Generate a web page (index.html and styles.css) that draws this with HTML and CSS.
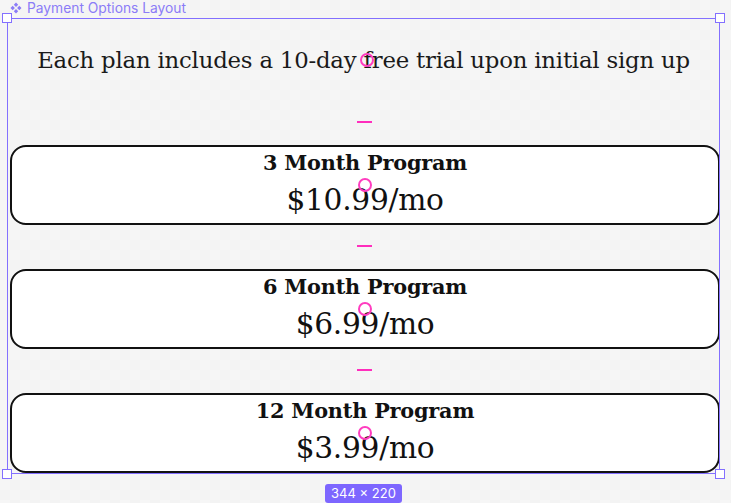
FILE: index.html
```html
<!DOCTYPE html>
<html>
<head>
<meta charset="utf-8">
<link rel="stylesheet" href="styles.css">
</head>
<body>
<div class="canvas">
  <div class="layer-label">
    <svg class="comp-icon" width="12" height="12" viewBox="0 0 12 12"><path d="M6 0.5 L8.2 2.7 L6 4.9 L3.8 2.7 Z M6 7.1 L8.2 9.3 L6 11.5 L3.8 9.3 Z M0.5 6 L2.7 3.8 L4.9 6 L2.7 8.2 Z M7.1 6 L9.3 3.8 L11.5 6 L9.3 8.2 Z" fill="#8b7cf7"/></svg>
    <span>Payment Options Layout</span>
  </div>
  <div class="frame">
    <p class="intro">Each plan includes a 10-day free trial upon initial sign up</p>
    <div class="plans">
      <div class="plan">
        <div class="plan-title">3 Month Program</div>
        <div class="plan-price">$10.99/mo</div>
      </div>
      <div class="plan">
        <div class="plan-title">6 Month Program</div>
        <div class="plan-price">$6.99/mo</div>
      </div>
      <div class="plan">
        <div class="plan-title">12 Month Program</div>
        <div class="plan-price">$3.99/mo</div>
      </div>
    </div>
    <span class="gap-mark m1"></span>
    <span class="gap-mark m2"></span>
    <span class="gap-mark m3"></span>
    <span class="dot d0"></span>
    <span class="dot d1"></span>
    <span class="dot d2"></span>
    <span class="dot d3"></span>
    <div class="selection">
      <span class="handle tl"></span>
      <span class="handle tr"></span>
      <span class="handle bl"></span>
      <span class="handle br"></span>
    </div>
  </div>
  <div class="size-row"><span class="size-badge">344 × 220</span></div>
</div>
</body>
</html>
```
FILE: styles.css
```css
html, body {
  margin: 0;
  padding: 0;
}
body {
  width: 731px;
  height: 503px;
  overflow: hidden;
  background-color: #f6f6f6;
  background-image:
    linear-gradient(45deg, #f3f3f3 25%, transparent 25%, transparent 75%, #f3f3f3 75%),
    linear-gradient(45deg, #f3f3f3 25%, transparent 25%, transparent 75%, #f3f3f3 75%);
  background-size: 20px 20px;
  background-position: 0 0, 10px 10px;
}
.canvas {
  display: flex;
  flex-direction: column;
}
.layer-label {
  height: 18px;
  display: flex;
  align-items: center;
  gap: 5px;
  padding-left: 10px;
  font-family: Inter, "Noto Sans", sans-serif;
  font-size: 13.8px;
  color: #8b7cf7;
  line-height: 18px;
}
.layer-label span {
  position: relative;
  top: -1px;
}
.comp-icon {
  position: relative;
  top: -1px;
}
.frame {
  position: relative;
  margin-left: 7px;
  width: 713px;
  height: 456px;
  box-sizing: border-box;
  padding-left: 3px;
}
.intro {
  margin: 0;
  padding-top: 27px;
  height: 100px;
  box-sizing: border-box;
  text-align: center;
  font-family: "DejaVu Serif", serif;
  font-size: 22.8px;
  line-height: 30px;
  color: #1a1a1a;
  padding-right: 3px;
  letter-spacing: -0.2px;
}
.plans {
  display: flex;
  flex-direction: column;
  gap: 44px;
  margin-top: 27px;
}
.plan {
  width: 710px;
  height: 80px;
  box-sizing: border-box;
  border: 2px solid #111;
  border-radius: 16px;
  background: #fff;
  display: flex;
  flex-direction: column;
  align-items: center;
  font-family: "DejaVu Serif", serif;
  color: #111;
}
.plan-title {
  font-weight: bold;
  font-size: 20.8px;
  line-height: 26px;
  margin-top: 3px;
  letter-spacing: -0.2px;
}
.plan-price {
  font-size: 29.7px;
  line-height: 36px;
  margin-top: 6px;
  letter-spacing: -0.3px;
}
.gap-mark {
  position: absolute;
  left: 350px;
  width: 15px;
  height: 2px;
  background: #ff2ebd;
}
.m1 { top: 103px; }
.m2 { top: 227px; }
.m3 { top: 351px; }
.dot {
  position: absolute;
  width: 10px;
  height: 10px;
  border: 2px solid #ff3cbf;
  border-radius: 50%;
  left: 351px;
}
.d0 { top: 35px; left: 353px; }
.d1 { top: 160px; }
.d2 { top: 284px; }
.d3 { top: 408px; }
.selection {
  position: absolute;
  inset: 0;
  border: 1px solid #8370ff;
  pointer-events: none;
}
.handle {
  position: absolute;
  width: 8px;
  height: 8px;
  background: #fff;
  border: 1px solid #8370ff;
}
.tl { left: -6px; top: -6px; }
.tr { right: -6px; top: -6px; }
.bl { left: -6px; bottom: -6px; }
.br { right: -6px; bottom: -6px; }
.size-row {
  display: flex;
  justify-content: center;
  margin-top: 10px;
  width: 727px;
}
.size-badge {
  background: #7d66ff;
  color: #fff;
  font-family: Inter, "Noto Sans", sans-serif;
  font-size: 13px;
  line-height: 19px;
  padding: 0 6px;
  border-radius: 3px;
}
```
